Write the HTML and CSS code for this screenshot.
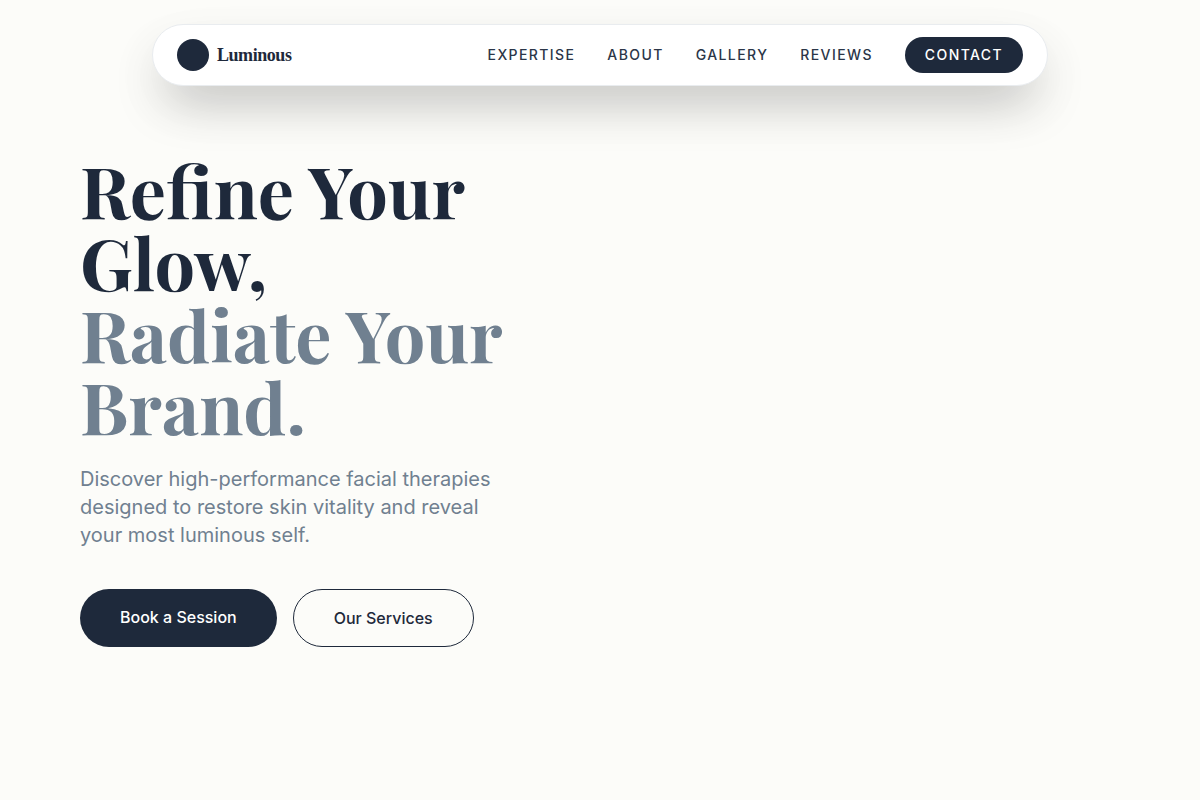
FILE: index.html
```html
<!DOCTYPE html>
<html lang="en">
<head>
<meta charset="utf-8">
<title>Luminous</title>
<link rel="stylesheet" href="styles.css">
</head>
<body>
<header class="nav">
  <a class="brand" href="#"><span class="brand-mark"></span><span class="brand-name">Luminous</span></a>
  <nav class="nav-links">
    <a class="nav-link" href="#">Expertise</a>
    <a class="nav-link" href="#">About</a>
    <a class="nav-link" href="#">Gallery</a>
    <a class="nav-link" href="#">Reviews</a>
    <a class="nav-cta" href="#">Contact</a>
  </nav>
</header>
<main class="hero">
  <h1 class="hero-title">Refine Your Glow,<br><span class="hero-accent">Radiate Your Brand.</span></h1>
  <p class="hero-text">Discover high-performance facial therapies designed to restore skin vitality and reveal your most luminous self.</p>
  <div class="hero-actions">
    <a class="btn btn-solid" href="#">Book a Session</a>
    <a class="btn btn-outline" href="#">Our Services</a>
  </div>
</main>
</body>
</html>
```
FILE: styles.css
```css
* { box-sizing: border-box; }
html, body { margin: 0; }
body {
  min-height: 800px;
  background: #fcfcf9;
  color: #1e293b;
  font-family: Inter, "Liberation Sans", sans-serif;
  overflow: hidden;
}
a { text-decoration: none; color: inherit; }
.nav {
  width: 896px;
  height: 62px;
  margin: 24px auto 0;
  padding: 0 24px;
  display: flex;
  align-items: center;
  justify-content: space-between;
  background: #fff;
  border: 1px solid #e9ecef;
  border-radius: 31px;
  box-shadow: 0 25px 50px -12px rgba(0, 0, 0, 0.25), 0 20px 60px rgba(0, 0, 0, 0.04);
}
.brand { display: flex; align-items: center; gap: 8px; }
.brand-mark { width: 32px; height: 32px; border-radius: 50%; background: #1e293b; }
.brand-name {
  font-family: "Liberation Serif", serif;
  font-weight: 700;
  font-size: 18px;
  line-height: 28px;
  letter-spacing: -0.45px;
}
.nav-links { display: flex; align-items: center; gap: 32px; }
.nav-link {
  font-size: 14px;
  line-height: 20px;
  font-weight: 500;
  letter-spacing: 1.4px;
  text-transform: uppercase;
  color: #2b3648;
}
.nav-cta {
  padding: 8px 20px;
  border-radius: 18px;
  background: #1e293b;
  color: #fff;
  font-size: 14px;
  line-height: 20px;
  font-weight: 500;
  letter-spacing: 1.4px;
  text-transform: uppercase;
}
.hero { padding: 67px 80px 0; }
.hero-title {
  max-width: 480px;
  margin: 0 0 24px;
  font-family: "Playfair Display", "Liberation Serif", serif;
  font-size: 72px;
  font-weight: 700;
  line-height: 72px;
}
.hero-accent { color: #708090; }
.hero-text {
  max-width: 420px;
  margin: 0 0 40px;
  color: #708090;
  font-size: 20px;
  line-height: 28px;
}
.hero-actions { display: flex; gap: 16px; }
.btn { padding: 16px 40px; border-radius: 29px; font-size: 16px; line-height: 24px; font-weight: 500; }
.btn-solid { background: #1e293b; color: #fff; }
.btn-outline { border: 1px solid #1e293b; }
```
